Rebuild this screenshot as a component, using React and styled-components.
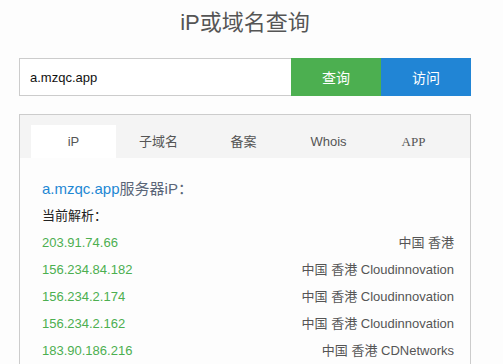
import React, { useState } from 'react';
import styled, { createGlobalStyle } from 'styled-components';

const GlobalStyle = createGlobalStyle`
  html, body {
    margin: 0;
    padding: 0;
    background: #fdfdfd;
    font-family: "Liberation Sans", Arial, "Noto Sans CJK SC", sans-serif;
  }
`;

const Page = styled.div`
  width: 452px;
  margin-left: 19px;
  padding-top: 9px;
`;

const Title = styled.h1`
  margin: 0;
  font-size: 22px;
  font-weight: normal;
  line-height: 28px;
  color: #555;
  text-align: center;
`;

const SearchRow = styled.div`
  display: flex;
  margin-top: 21px;
  height: 38px;
`;

const Input = styled.input`
  flex: 1;
  min-width: 0;
  box-sizing: border-box;
  height: 38px;
  border: 1px solid #ccc;
  border-right: none;
  padding: 0 10px;
  font-family: inherit;
  font-size: 13px;
  color: #111;
  background: #fff;
  outline: none;
`;

const Button = styled.button`
  width: 90px;
  height: 38px;
  border: none;
  background: ${p => p.$color};
  color: #fff;
  font-family: inherit;
  font-size: 14px;
  cursor: pointer;
`;

const Panel = styled.div`
  margin-top: 18px;
  border: 1px solid #ccc;
  border-bottom: none;
  background: #fdfdfd;
`;

const TabBar = styled.div`
  display: flex;
  background: #f4f4f4;
  padding: 10px 11px 0;
`;

const Tab = styled.div`
  width: 85px;
  height: 33px;
  line-height: 33px;
  text-align: center;
  font-size: 13px;
  color: #555;
  background: ${p => (p.$active ? '#fff' : 'transparent')};
  font-family: ${p => (p.$serif ? '"Liberation Serif", "Times New Roman", serif' : 'inherit')};
  cursor: pointer;
`;

const Content = styled.div`
  padding: 17px 16px 0 22px;
  font-size: 13px;
`;

const Line = styled.div`
  height: 27px;
  line-height: 27px;
  font-size: ${p => p.$size || 13}px;
  color: ${p => p.$color || '#222'};
`;

const Link = styled.span`
  color: #1e88d4;
`;

const Row = styled.div`
  display: flex;
  justify-content: space-between;
  height: 27px;
  line-height: 27px;
  font-size: 13px;
`;

const Ip = styled.span`
  color: #4caf50;
`;

const Location = styled.span`
  color: #555;
`;

const tabs = ['iP', '子域名', '备案', 'Whois', 'APP'];

const records = [
  { ip: '203.91.74.66', loc: '中国 香港' },
  { ip: '156.234.84.182', loc: '中国 香港 Cloudinnovation' },
  { ip: '156.234.2.174', loc: '中国 香港 Cloudinnovation' },
  { ip: '156.234.2.162', loc: '中国 香港 Cloudinnovation' },
  { ip: '183.90.186.216', loc: '中国 香港 CDNetworks' },
];

const App = () => {
  const [domain, setDomain] = useState('a.mzqc.app');
  const [active, setActive] = useState(0);

  return (
    <Page>
      <GlobalStyle />
      <Title>iP或域名查询</Title>
      <SearchRow>
        <Input value={domain} onChange={e => setDomain(e.target.value)} />
        <Button $color="#4caf50">查询</Button>
        <Button $color="#2185d5">访问</Button>
      </SearchRow>
      <Panel>
        <TabBar>
          {tabs.map((t, i) => (
            <Tab key={t} $active={i === active} $serif={t === 'APP'} onClick={() => setActive(i)}>
              {t}
            </Tab>
          ))}
        </TabBar>
        <Content>
          <Line $size={15} $color="#5a6678">
            <Link>a.mzqc.app</Link>服务器iP：
          </Line>
          <Line>当前解析：</Line>
          {records.map(r => (
            <Row key={r.ip}>
              <Ip>{r.ip}</Ip>
              <Location>{r.loc}</Location>
            </Row>
          ))}
        </Content>
      </Panel>
    </Page>
  );
};

export default App;
